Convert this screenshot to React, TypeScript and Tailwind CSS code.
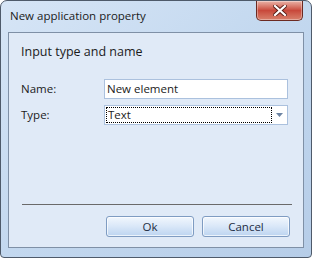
const font = { fontFamily: '"Open Sans", "Noto Sans", sans-serif' };

function CloseButton() {
  return (
    <div className="mr-[8px] flex h-[20px] w-[47px] items-center justify-center rounded-b-[5px] border border-t-0 border-[#6b2a22] bg-gradient-to-b from-[#e8b2a8] via-[#c8483b] to-[#d8806c] shadow-[inset_0_0_0_1px_rgba(255,255,255,0.35)]">
      <svg width="14" height="11" viewBox="0 0 14 11">
        <path
          d="M2 1 L12 10 M12 1 L2 10"
          stroke="#5a1f18"
          strokeWidth="4"
          strokeLinecap="square"
        />
        <path
          d="M2 1 L12 10 M12 1 L2 10"
          stroke="#ffffff"
          strokeWidth="2.2"
          strokeLinecap="square"
        />
      </svg>
    </div>
  );
}

function DialogButton({ label }: { label: string }) {
  return (
    <button className="flex h-[21px] w-[88px] items-center justify-center rounded-[3px] border border-[#7f9cc2] bg-gradient-to-b from-[#f2f7fd] via-[#d9e7f8] to-[#bcd4f0] text-[11.5px] text-[#1e2d44] shadow-[inset_0_0_0_1px_rgba(255,255,255,0.7)]">
      {label}
    </button>
  );
}

export default function App() {
  return (
    <div
      className="flex h-[258px] w-[312px] flex-col overflow-hidden rounded-t-[7px] rounded-b-[4px] border border-[#4e5a6a] bg-gradient-to-br from-[#d6e5f6] via-[#c3d8ef] to-[#b6cde8]"
      style={font}
    >
      <div className="flex h-[31px] items-start justify-between">
        <span className="pl-[9px] pt-[6px] text-[11.5px] text-[#1b1b1b]">
          New application property
        </span>
        <CloseButton />
      </div>
      <div className="mx-[7px] mb-[9px] flex flex-1 flex-col border border-[#7f90a6] bg-[#e0eaf7] pl-[12px] pr-[13px]">
        <div className="pt-[10px] text-[12.5px] text-[#1b1b1b]">
          Input type and name
        </div>
        <div className="mt-[17px] flex items-center">
          <span className="w-[83px] text-[11.5px] text-[#1b1b1b]">Name:</span>
          <div className="flex h-[20px] w-[184px] items-center border border-[#abc1de] bg-white pl-[2px] text-[11.5px] text-[#1b1b1b]">
            New element
          </div>
        </div>
        <div className="mt-[6px] flex items-center">
          <span className="w-[83px] text-[11.5px] text-[#1b1b1b]">Type:</span>
          <div className="flex h-[20px] w-[184px] items-center border border-[#abc1de] bg-white p-[1px]">
            <div className="flex h-full flex-1 items-center border border-dotted border-[#000] pl-[1px] text-[11.5px] text-[#1b1b1b]">
              Text
            </div>
            <div className="flex w-[14px] items-center justify-center">
              <svg width="7" height="4" viewBox="0 0 7 4">
                <path d="M0 0 H7 L3.5 4 Z" fill="#6d84a3" />
              </svg>
            </div>
          </div>
        </div>
        <div className="flex-1" />
        <div className="ml-[1px] mr-[-2px] h-px bg-[#6a6a6a]" />
        <div className="mt-[11px] mb-[10px] flex justify-end gap-[8px]">
          <DialogButton label="Ok" />
          <DialogButton label="Cancel" />
        </div>
      </div>
    </div>
  );
}
